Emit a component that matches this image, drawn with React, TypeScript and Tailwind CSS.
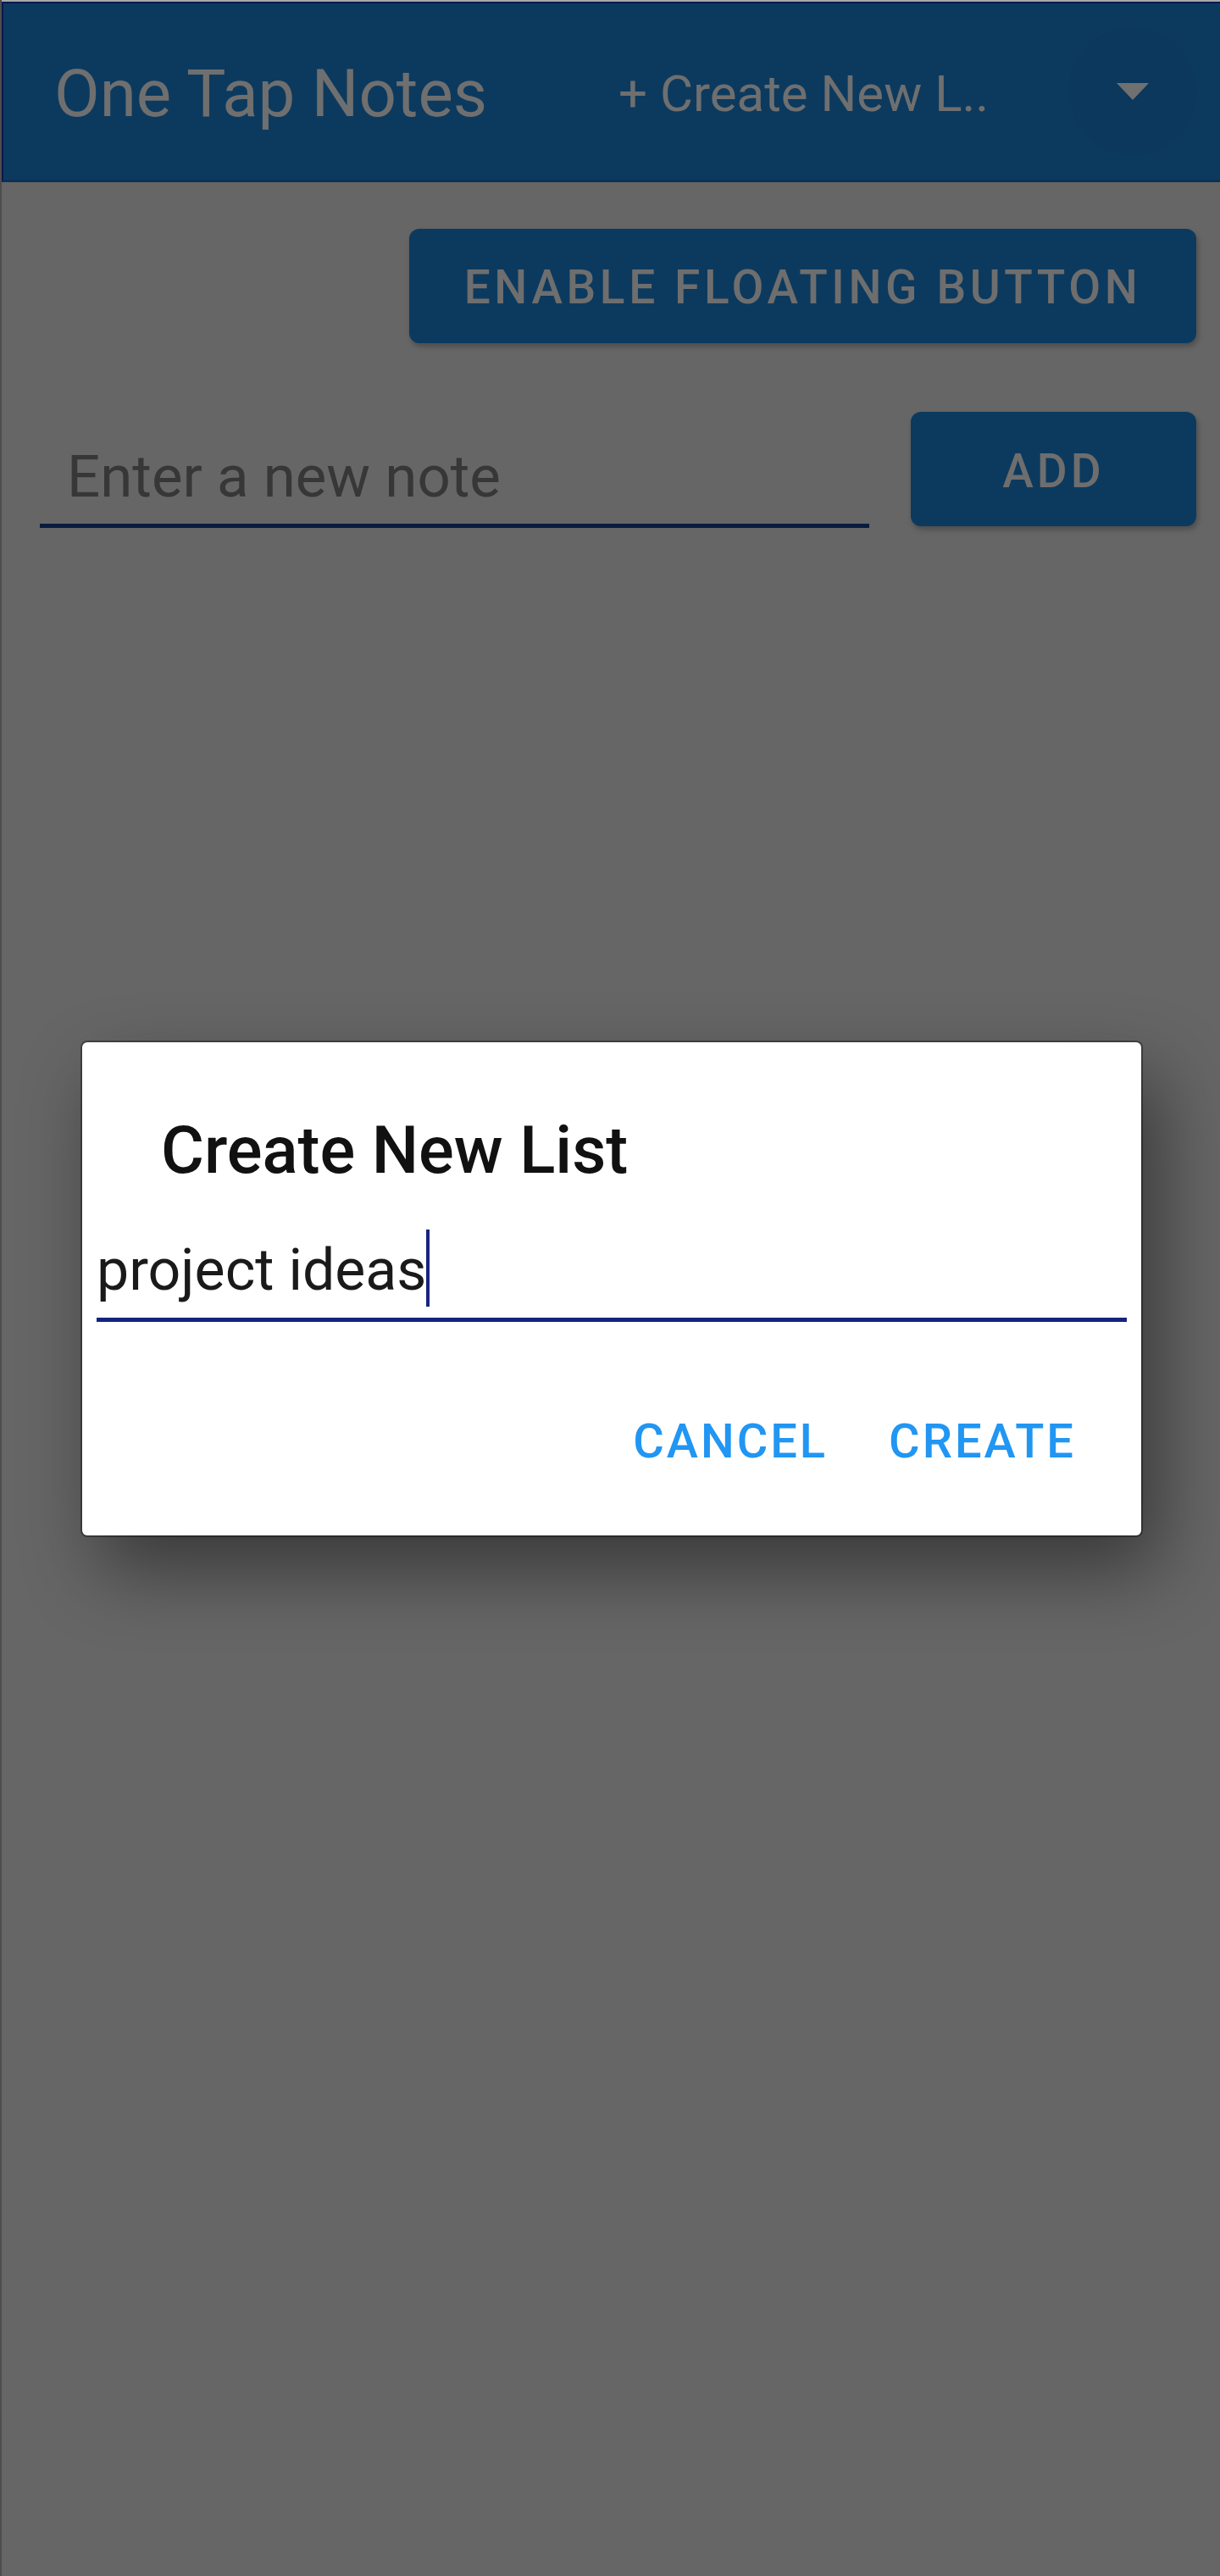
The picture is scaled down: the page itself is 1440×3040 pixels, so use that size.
import React from "react";

export default function App() {
  return (
    <div className="relative w-[1440px] h-[3040px] overflow-hidden bg-[#666666] font-['Roboto','Liberation_Sans',sans-serif] border-l-2 border-[#4d4d4d]">
      <div className="h-[2px] bg-[#a8a8a8]" />
      <header className="h-[213px] bg-[#0c3a5f] border-t-2 border-t-[#0a1850] border-l-2 border-l-[#0a1850] border-b-[3px] border-b-[#0a3153] flex items-center">
        <div className="w-[726px] pl-[60px] pt-[6px] text-[78px] leading-none text-[#6f6f6f] whitespace-nowrap">
          One Tap Notes
        </div>
        <div className="pt-[6px] text-[60px] leading-none text-[#6f6f6f] whitespace-nowrap">
          + Create New L..
        </div>
        <div className="ml-auto mr-[28px] w-[150px] h-[150px] rounded-full bg-[#0b385c] flex items-center justify-center">
          <svg width="40" height="22" viewBox="0 0 40 22">
            <polygon points="1,1 39,1 20,21" fill="#707070" />
          </svg>
        </div>
      </header>

      <main className="pr-[28px]">
        <div className="flex justify-end pt-[55px]">
          <button className="w-[929px] h-[135px] pt-[4px] rounded-[12px] bg-[#0c3a5f] shadow-[2px_4px_6px_rgba(0,0,0,0.25)] text-[55px] font-medium tracking-[4.6px] text-[#6e6e6e] leading-none">
            ENABLE FLOATING BUTTON
          </button>
        </div>
        <div className="flex items-start mt-[81px] pl-[45px]">
          <div className="w-[979px] h-[137px] flex items-end pl-[32px] pb-[21px] border-b-[5px] border-[#081c3e]">
            <span className="text-[69px] leading-none text-[#373737] whitespace-nowrap">Enter a new note</span>
          </div>
          <button className="ml-[49px] w-[337px] h-[135px] pt-[6px] rounded-[12px] bg-[#0c3a5f] shadow-[2px_4px_6px_rgba(0,0,0,0.25)] text-[55px] font-medium tracking-[4px] text-[#6e6e6e] leading-none">
            ADD
          </button>
        </div>
      </main>

      <div className="absolute left-[95px] top-[1230px] w-[1250px] h-[582px] bg-white rounded-[6px] shadow-[0_0_0_2px_rgba(0,0,0,0.35),20px_40px_90px_rgba(0,0,0,0.45)] flex flex-col">
        <div className="pl-[93px] pt-[90px] text-[78px] leading-[76px] font-medium text-[#111111] whitespace-nowrap">
          Create New List
        </div>
        <div className="mx-[17px] mt-[52px] border-b-[5px] border-[#14247e] pb-[10px] flex items-center">
          <span className="pt-[6px] text-[68px] leading-[91px] text-[#1a1a1a] whitespace-nowrap">project ideas</span>
          <span className="inline-block w-[4px] h-[91px] bg-[#1a237e]" />
        </div>
        <div className="flex justify-end pr-[77px] pt-[113px] gap-[72px]">
          <span className="text-[56px] leading-[56px] font-medium tracking-[3px] text-[#2196f3]">CANCEL</span>
          <span className="text-[56px] leading-[56px] font-medium tracking-[3px] text-[#2196f3]">CREATE</span>
        </div>
      </div>
    </div>
  );
}
